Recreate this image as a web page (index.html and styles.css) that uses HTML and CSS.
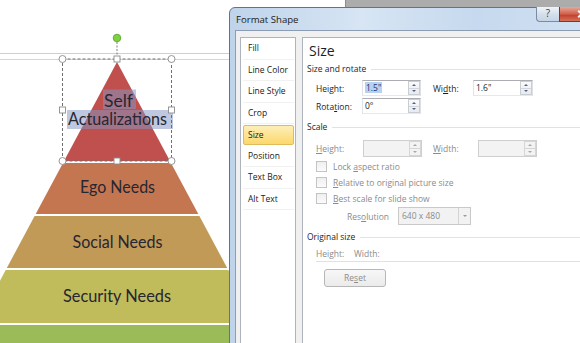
FILE: index.html
```html
<!DOCTYPE html>
<html>
<head>
<meta charset="utf-8">
<link rel="stylesheet" href="styles.css">
</head>
<body>
<div class="screen">
  <svg class="slide" width="580" height="343" viewBox="0 0 580 343" xmlns="http://www.w3.org/2000/svg">
    <line x1="0" y1="53.5" x2="240" y2="53.5" stroke="#cfcfcf" stroke-width="1"/>
    <line x1="0" y1="59.5" x2="240" y2="59.5" stroke="#d6d6d6" stroke-width="1"/>
    <polygon points="117,62 170,161 64,161" fill="#c0504d"/>
    <polygon points="63,163 171,163 198.3,214 35.7,214" fill="#c47650"/>
    <polygon points="34.6,216 199.4,216 227.2,268 6.8,268" fill="#c29a58"/>
    <polygon points="5.7,270 228.3,270 256.6,323 -22.6,323" fill="#c0bc5c"/>
    <polygon points="-23.7,325 257.7,325 268,345 -40,345" fill="#9bbb59"/>
    <rect x="103" y="89.5" width="33" height="19.5" fill="rgba(130,149,197,0.52)"/>
    <rect x="67" y="110" width="106" height="19" fill="rgba(130,149,197,0.52)"/>
    <g class="pyr-text">
      <text x="118.5" y="106.5" textLength="29" lengthAdjust="spacingAndGlyphs">Self</text>
      <text x="117.5" y="125" textLength="99" lengthAdjust="spacingAndGlyphs">Actualizations</text>
      <text x="117.5" y="193" textLength="75" lengthAdjust="spacingAndGlyphs">Ego Needs</text>
      <text x="117.5" y="247.5" textLength="90" lengthAdjust="spacingAndGlyphs">Social Needs</text>
      <text x="117" y="301.5" textLength="108" lengthAdjust="spacingAndGlyphs">Security Needs</text>
    </g>
    <rect x="62.5" y="59" width="109" height="102" fill="none" stroke="#6f6f6f" stroke-width="1" stroke-dasharray="3 2"/>
    <line x1="117" y1="42" x2="117" y2="56" stroke="#7f7f7f" stroke-width="1" stroke-dasharray="2 1.5"/>
    <circle cx="117" cy="38" r="3.8" fill="#7fd23f" stroke="#5c9e2c" stroke-width="0.8"/>
    <g fill="#ffffff" stroke="#8c8c8c" stroke-width="0.9">
      <circle cx="62.5" cy="59" r="3.5"/>
      <circle cx="171.5" cy="59" r="3.5"/>
      <circle cx="62.5" cy="161" r="3.5"/>
      <circle cx="171.5" cy="161" r="3.5"/>
      <rect x="114" y="56" width="6" height="6"/>
      <rect x="59.5" y="107" width="6" height="6"/>
      <rect x="168.5" y="107" width="6" height="6"/>
      <rect x="114" y="158" width="6" height="6"/>
    </g>
  </svg>

  <div class="backwin"></div>

  <div class="dialog">
    <div class="titlebar">
      <span class="title">Format Shape</span>
      <div class="caption">
        <span class="cap-help">?</span>
        <span class="cap-close" aria-label="Close"></span>
      </div>
    </div>
    <div class="dialog-body">
      <ul class="tabs">
        <li class="tab">Fill</li>
        <li class="tab">Line Color</li>
        <li class="tab">Line Style</li>
        <li class="tab">Crop</li>
        <li class="tab active">Size</li>
        <li class="tab">Position</li>
        <li class="tab">Text Box</li>
        <li class="tab">Alt Text</li>
      </ul>
      <div class="panel">
        <div class="heading">Size</div>

        <div class="group-label">Size and rotate</div>
        <div class="row row-first">
          <span class="lbl">Hei<u>g</u>ht:</span>
          <span class="spin"><span class="spin-val"><span class="sel">1.5"</span></span><span class="spin-btns"><i class="up"></i><i class="down"></i></span></span>
          <span class="lbl lbl-w">Wi<u>d</u>th:</span>
          <span class="spin spin-wide"><span class="spin-val">1.6"</span><span class="spin-btns"><i class="up"></i><i class="down"></i></span></span>
        </div>
        <div class="row">
          <span class="lbl">Rota<u>t</u>ion:</span>
          <span class="spin"><span class="spin-val">0°</span><span class="spin-btns"><i class="up"></i><i class="down"></i></span></span>
        </div>

        <div class="group-label gap5">Scale</div>
        <div class="row gap5 disabled">
          <span class="lbl lbl-s"><u>H</u>eight:</span>
          <span class="spin spin-off"><span class="spin-val"></span><span class="spin-btns"><i class="up"></i><i class="down"></i></span></span>
          <span class="lbl lbl-ws"><u>W</u>idth:</span>
          <span class="spin spin-off"><span class="spin-val"></span><span class="spin-btns"><i class="up"></i><i class="down"></i></span></span>
        </div>
        <div class="check first-check"><span class="cb"></span><span>Lock <u>a</u>spect ratio</span></div>
        <div class="check"><span class="cb"></span><span><u>R</u>elative to original picture size</span></div>
        <div class="check"><span class="cb"></span><span><u>B</u>est scale for slide show</span></div>
        <div class="row res-row disabled">
          <span class="lbl lbl-res">Res<u>o</u>lution</span>
          <span class="select"><span class="select-val">640 x 480</span><span class="select-btn"></span></span>
        </div>

        <div class="group-label gap5">Original size</div>
        <div class="orig-row"><span class="orig-h">Height:</span><span>Width:</span></div>
        <div class="btn-reset">Re<u>s</u>et</div>
      </div>
    </div>
  </div>
</div>
</body>
</html>
```

FILE: styles.css
```css
* { box-sizing: border-box; }
html, body { margin: 0; padding: 0; }
body {
  width: 580px;
  height: 343px;
  overflow: hidden;
  background: #ffffff;
  font-family: "Open Sans", "Noto Sans", sans-serif;
}
.screen {
  position: relative;
  width: 580px;
  height: 343px;
  overflow: hidden;
  background: #ffffff;
}
.slide { display: block; }
.pyr-text text {
  font-family: "Lato", "Open Sans", sans-serif;
  font-size: 16.5px;
  fill: #262630;
  text-anchor: middle;
}
.backwin {
  position: absolute;
  left: 345px;
  top: -20px;
  width: 260px;
  height: 60px;
  background: #acacac;
  border-left: 1px solid #8d8d8d;
}

/* dialog window */
.dialog {
  position: absolute;
  left: 229px;
  top: 7px;
  width: 380px;
  height: 350px;
  border: 1px solid #62738b;
  border-radius: 6px 6px 0 0;
  background: linear-gradient(to right, #bfd3ea 0%, #d7e5f4 35%, #c6d9ee 65%, #d2e1f3 100%);
  padding: 0 5px;
  display: flex;
  flex-direction: column;
}
.titlebar {
  height: 22px;
  display: flex;
  align-items: center;
  justify-content: space-between;
}
.title {
  font-size: 9.6px;
  color: #1b1b1b;
  padding-left: 1px;
}
.caption {
  align-self: flex-start;
  display: flex;
  margin-top: -1px;
  height: 15px;
}
.cap-help {
  width: 23px;
  height: 15px;
  border: 1px solid #7a8aa0;
  border-top: none;
  border-right: none;
  border-radius: 0 0 0 4px;
  background: linear-gradient(#f0f4f9, #d3deeb 55%, #c6d4e6);
  font-size: 10px;
  line-height: 13px;
  text-align: center;
  color: #3a3f48;
}
.cap-close {
  position: relative;
  width: 44px;
  height: 15px;
  border: 1px solid #8d2f22;
  border-top: none;
  border-radius: 0 0 4px 0;
  background: linear-gradient(#e6a899, #d0614c 50%, #c44330 60%, #d4715a);
}
.cap-close::before,
.cap-close::after {
  content: "";
  position: absolute;
  left: 17px;
  top: 6px;
  width: 10px;
  height: 2px;
  background: #ffffff;
  transform: rotate(40deg);
}
.cap-close::after { transform: rotate(-40deg); }
.dialog-body {
  flex: 1;
  background: #f0f0f0;
  border: 1px solid #8b9cb3;
  padding: 6px 0 0 4px;
  display: flex;
  gap: 6px;
}

/* tab list */
.tabs {
  width: 56px;
  margin: 0;
  padding: 0;
  list-style: none;
  border: 1px solid #adb4bd;
  background: #ffffff;
}
.tab {
  height: 21.5px;
  margin: 0 1px 0 2px;
  padding-left: 5px;
  font-size: 8.5px;
  line-height: 20.5px;
  color: #202020;
  border-bottom: 1px solid #f1f1f1;
  white-space: nowrap;
}
.tab.active {
  height: 19.5px;
  margin: 1px 1px 1px 2px;
  padding-left: 4px;
  line-height: 17.5px;
  border: 1px solid #e0bb5c;
  border-radius: 2px;
  background: linear-gradient(#fdefb8, #fcd86c);
}

/* content panel */
.panel {
  flex: 1;
  border: 1px solid #adb4bd;
  background: #ffffff;
  padding: 3px 0 0 4px;
  font-size: 8.5px;
  color: #1e1e1e;
}
.heading {
  height: 20px;
  font-size: 14px;
  line-height: 20px;
  padding-left: 2px;
  color: #1e1e1e;
}
.group-label {
  height: 14px;
  margin-top: 1px;
  display: flex;
  align-items: center;
  gap: 5px;
  line-height: 14px;
}
.group-label::after {
  content: "";
  flex: 1;
  border-top: 1px solid #dfe2e6;
}
.gap5 { margin-top: 5px; }
.row {
  height: 18px;
  display: flex;
  align-items: center;
  padding-left: 9px;
}
.row-first { margin-top: 3px; }
.row.gap5 { margin-top: 5px; }
.lbl { width: 46px; }
.lbl-w { width: 40px; margin-left: 12px; }
.lbl-s { width: 47px; }
.lbl-ws { width: 45px; margin-left: 11px; }
.disabled { color: #8b8b8b; }
.spin {
  width: 59px;
  height: 16px;
  display: flex;
  align-items: stretch;
  border: 1px solid #abadb3;
  border-color: #abadb3 #dbdfe6 #e3e9ef #e2e3ea;
  background: #ffffff;
}
.spin-wide { width: 60px; }
.spin-val {
  flex: 1;
  padding-left: 2px;
  line-height: 14px;
  color: #1e1e1e;
}
.sel {
  background: #b9d1f1;
  color: #1b3668;
  padding: 0 1px;
}
.spin-btns {
  width: 12px;
  display: flex;
  flex-direction: column;
  border: 1px solid #c9ced5;
  background: linear-gradient(#fafafa, #e8eaed);
}
.spin-btns i {
  flex: 1;
  display: flex;
  align-items: center;
  justify-content: center;
}
.spin-btns i.up { border-bottom: 1px solid #d2d6dc; }
.spin-btns i.up::after {
  content: "";
  border-left: 2.5px solid transparent;
  border-right: 2.5px solid transparent;
  border-bottom: 2.5px solid #4e6387;
}
.spin-btns i.down::after {
  content: "";
  border-left: 2.5px solid transparent;
  border-right: 2.5px solid transparent;
  border-top: 2.5px solid #4e6387;
}
.spin-off {
  height: 17px;
  background: #f3f3f3;
  border-color: #cfcfcf;
}
.spin-off .spin-btns { border-color: #d6d6d6; background: #f3f3f3; }
.spin-off .spin-btns i.up::after { border-bottom-color: #a8a8a8; }
.spin-off .spin-btns i.down::after { border-top-color: #a8a8a8; }

.check {
  height: 16px;
  display: flex;
  align-items: center;
  padding-left: 9px;
  color: #8b8b8b;
}
.first-check { margin-top: 1px; }
.cb {
  width: 11px;
  height: 11px;
  margin-right: 6px;
  border: 1px solid #c4c4c4;
  background: linear-gradient(#efefef, #fbfbfb);
}
.res-row { margin-top: 1px; padding-left: 40px; }
.lbl-res { width: 51px; }
.select {
  width: 73px;
  height: 18px;
  display: flex;
  border: 1px solid #c9c9c9;
  background: #f2f2f2;
}
.select-val {
  flex: 1;
  padding-left: 3px;
  line-height: 16px;
  color: #8b8b8b;
}
.select-btn {
  width: 12px;
  border-left: 1px solid #d3d3d3;
  display: flex;
  align-items: center;
  justify-content: center;
}
.select-btn::after {
  content: "";
  border-left: 2.5px solid transparent;
  border-right: 2.5px solid transparent;
  border-top: 2.5px solid #9a9a9a;
}
.orig-row {
  margin: 3px 0 0 9px;
  height: 15px;
  line-height: 14px;
  border-bottom: 1px solid #e1e1e1;
  color: #8b8b8b;
}
.orig-h { display: inline-block; width: 38px; }
.btn-reset {
  width: 62px;
  height: 18px;
  margin: 7px 0 0 17px;
  border: 1px solid #b7b7b7;
  border-radius: 3px;
  background: linear-gradient(#f7f7f7, #ebebeb);
  color: #8d8d8d;
  text-align: center;
  line-height: 16px;
}
```
